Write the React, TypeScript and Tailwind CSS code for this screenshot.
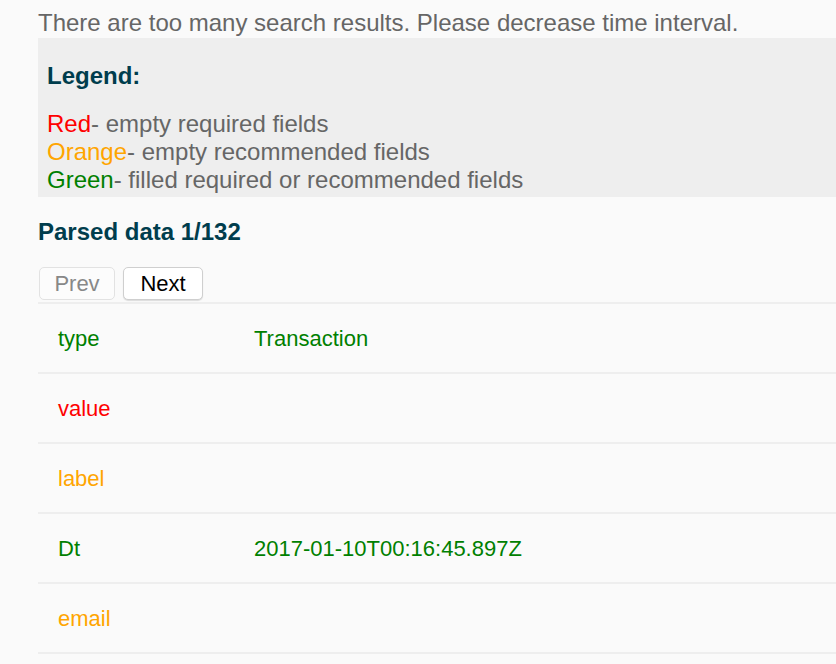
const rows: { key: string; value: string; color: string }[] = [
  { key: "type", value: "Transaction", color: "text-[#008000]" },
  { key: "value", value: "", color: "text-[#ff0000]" },
  { key: "label", value: "", color: "text-[#ffa500]" },
  { key: "Dt", value: "2017-01-10T00:16:45.897Z", color: "text-[#008000]" },
  { key: "email", value: "", color: "text-[#ffa500]" },
];

export default function App() {
  return (
    <div className="min-h-screen bg-[#fafafa] pl-[38px] font-['Liberation_Sans',Arial,sans-serif] overflow-hidden">
      <p className="pt-[9px] pb-[1px] text-[24px] leading-[28px] text-[#666] whitespace-nowrap">
        There are too many search results. Please decrease time interval.
      </p>

      {/* Legend */}
      <div className="bg-[#eeeeee] pl-[9px] pt-[24px] pb-[3px] text-[24px] leading-[28px] text-[#666]">
        <h3 className="font-bold text-[#003d4d]">Legend:</h3>
        <div className="mt-[20px]">
          <div>
            <span className="text-[#ff0000]">Red</span>- empty required fields
          </div>
          <div>
            <span className="text-[#ffa500]">Orange</span>- empty recommended fields
          </div>
          <div>
            <span className="text-[#008000]">Green</span>- filled required or recommended fields
          </div>
        </div>
      </div>

      <h3 className="mt-[20px] pt-[1px] text-[24px] leading-[28px] font-bold text-[#003d4d]">Parsed data 1/132</h3>

      <div className="mt-[21px] ml-[1px] flex gap-[8px]">
        <button className="w-[76px] h-[33px] rounded-[5px] border border-[#e2e2e2] bg-[#fcfcfc] text-[22px] leading-none text-[#888]">
          Prev
        </button>
        <button className="w-[80px] h-[33px] rounded-[5px] border border-[#cfcfcf] bg-white text-[22px] leading-none text-black shadow-[0_1px_1px_rgba(0,0,0,0.12)]">
          Next
        </button>
      </div>

      <div className="mt-[2px] border-t-2 border-[#eeeeee]">
        {rows.map((r) => (
          <div key={r.key} className={`flex items-center h-[70px] pt-[1px] border-b-2 border-[#eeeeee] text-[22px] ${r.color}`}>
            <div className="w-[216px] pl-[20px]">{r.key}</div>
            <div>{r.value}</div>
          </div>
        ))}
      </div>
    </div>
  );
}
